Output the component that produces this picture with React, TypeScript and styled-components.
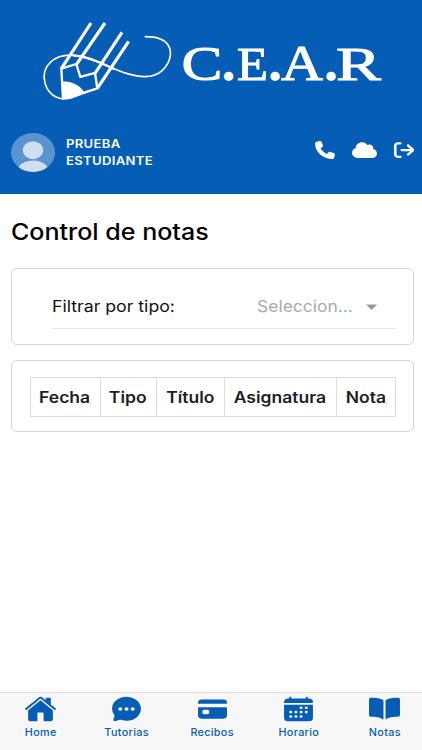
import React from "react";
import styled, { createGlobalStyle } from "styled-components";
import {
  IoBook,
  IoCalendar,
  IoCard,
  IoChatbubbleEllipses,
  IoHome,
} from "react-icons/io5";
import { FaArrowRightFromBracket, FaCloud, FaPhone } from "react-icons/fa6";

const blue = "#065db5";

const GlobalStyle = createGlobalStyle`
  * { box-sizing: border-box; }
  body { margin: 0; background: #fff; }
`;

const Page = styled.div`
  display: flex;
  flex-direction: column;
  width: 422px;
  height: 750px;
  overflow: hidden;
  background: #fff;
  color: #111;
  font-family: Inter, "Liberation Sans", sans-serif;
`;

const Header = styled.header`
  height: 194px;
  flex: none;
  background: ${blue};
  color: #fff;
`;

const Logo = styled.svg`
  display: block;
  width: 422px;
  height: 120px;
`;

const ProfileRow = styled.div`
  display: flex;
  align-items: center;
  height: 64px;
  padding: 0 8px 0 11px;
`;

const Avatar = styled.svg`
  width: 44px;
  height: 39px;
  flex: none;
`;

const UserName = styled.div`
  margin-left: 11px;
  width: 110px;
  font-size: 12px;
  line-height: 17px;
  font-weight: 600;
  letter-spacing: 0.3px;
  transform: scaleX(1.09);
  transform-origin: left;
`;

const Actions = styled.div`
  display: flex;
  align-items: center;
  margin-left: auto;
  padding-bottom: 4px;
  gap: 17px;
`;

const IconBox = styled.span<{ $w: number; $h: number }>`
  display: block;
  flex: none;
  width: ${(p) => p.$w}px;
  height: ${(p) => p.$h}px;
  svg {
    display: block;
    width: 100%;
    height: 100%;
  }
`;

const Main = styled.main`
  flex: 1;
  padding: 20px 8px 0 11px;
`;

const Title = styled.h1`
  margin: 0 0 19px;
  width: max-content;
  font-size: 22.5px;
  line-height: 35px;
  font-weight: 450;
  color: #000;
  transform: scaleX(1.112);
  transform-origin: left;
`;

const Card = styled.section<{ $height: number }>`
  height: ${(p) => p.$height}px;
  margin-bottom: 15px;
  padding: 15px 17px 0 18px;
  border: 1px solid #d6d6d6;
  border-radius: 6px;
`;

const FilterRow = styled.div`
  display: flex;
  align-items: center;
  height: 45px;
  margin-left: 22px;
  border-bottom: 1px solid #e6e6e6;
`;

const FilterText = styled.span<{ $muted?: boolean }>`
  font-size: 16px;
  white-space: nowrap;
  color: ${(p) => (p.$muted ? "#a9a9a9" : "#111")};
  transform: scaleX(${(p) => (p.$muted ? 1.09 : 1.105)});
  transform-origin: ${(p) => (p.$muted ? "right" : "left")};
  margin-left: ${(p) => (p.$muted ? "auto" : "0")};
`;

const Caret = styled.svg`
  width: 11px;
  height: 6px;
  margin: 1px 19px 0 13px;
`;

const Table = styled.table`
  width: 365px;
  margin-top: 1px;
  table-layout: fixed;
  border-collapse: collapse;
`;

const HeadCell = styled.th<{ $width: number }>`
  width: ${(p) => p.$width}px;
  height: 39px;
  padding: 0 1px 0 0;
  border: 1px solid #dcdee1;
  font-size: 15.5px;
  font-weight: 600;
  color: #1c1e21;
  text-align: center;
`;

const HeadText = styled.span`
  display: inline-block;
  transform: scaleX(1.13);
`;

const TabBar = styled.nav`
  height: 58px;
  flex: none;
  border-top: 1px solid #dedede;
  background: #f7f7f7;
  color: ${blue};
`;

const TabGrid = styled.div`
  display: grid;
  grid-template-columns: repeat(5, 86px);
  margin-left: -2.5px;
`;

const Tab = styled.a`
  display: flex;
  flex-direction: column;
  align-items: center;
  padding-top: 2px;
`;

const TabLabel = styled.span`
  margin-top: 2px;
  font-size: 10px;
  line-height: 14px;
  font-weight: 500;
  letter-spacing: 0.3px;
  transform: scaleX(1.08);
`;

const letters = [
  { ch: "C", x: 181.5, w: 41, size: 49 },
  { ch: "E", x: 237, w: 31, size: 47 },
  { ch: "A", x: 281, w: 42, size: 51 },
  { ch: "R", x: 336, w: 45, size: 47 },
];

const dots = [228.5, 275, 331];

const columns = [
  { label: "Fecha", width: 70 },
  { label: "Tipo", width: 56 },
  { label: "Título", width: 68 },
  { label: "Asignatura", width: 112 },
  { label: "Nota", width: 59 },
];

const tabs = [
  { label: "Home", Icon: IoHome },
  { label: "Tutorias", Icon: IoChatbubbleEllipses },
  { label: "Recibos", Icon: IoCard },
  { label: "Horario", Icon: IoCalendar },
  { label: "Notas", Icon: IoBook },
];

export default function App() {
  return (
    <Page>
      <GlobalStyle />
      <Header>
        <Logo viewBox="0 0 422 120" fill="#fff">
          <g transform="translate(30 10) scale(.33333)" fill="none" stroke="#fff" strokeLinecap="round" strokeLinejoin="round">
            <g strokeLinecap="butt" strokeWidth="9.5">
              <path d="M183 39 L94 176 M225 39 L139 164 M276 67 L195 190 M296 94 L202 235" />
            </g>
            <path strokeWidth="7" d="M94 176 L139 162 L151 201 L195 189 L202 235 L158 249 M94 176 L99 265" />
            <path strokeWidth="5" d="M202 235 L137 259 C95 278 57 261 45 220 C31 165 77 131 131 136 C190 141 237 174 292 191 C329 202 372 205 397 181 C419 160 428 129 416 108 C404 86 374 80 346 80" />
            <path d="M131 136 C177 139 212 159 250 176" strokeWidth="7" />
            <path d="M97 215 C125 211 151 228 162 246 L134 260 C122 266 111 267 99 267Z" fill="#fff" stroke="none" />
          </g>
          <g fontFamily='"Liberation Serif", serif' stroke="#fff">
            {letters.map((l) => (
              <text
                key={l.ch}
                x={l.x}
                y="80"
                textLength={l.w}
                lengthAdjust="spacingAndGlyphs"
                fontSize={l.size}
                strokeWidth="1"
              >
                {l.ch}
              </text>
            ))}
            {dots.map((x) => (
              <text key={x} x={x} y="79" textAnchor="middle" fontSize="44" strokeWidth="4" strokeLinejoin="round">.</text>
            ))}
          </g>
        </Logo>
        <ProfileRow>
          <Avatar viewBox="0 0 44 39">
            <clipPath id="avatar"><ellipse cx="22" cy="19.5" rx="22" ry="19.5" /></clipPath>
            <g clipPath="url(#avatar)">
              <rect width="44" height="39" fill="#5993d1" />
              <ellipse cx="22" cy="17.2" rx="10.2" ry="9" fill="#d0dff0" />
              <ellipse cx="22" cy="38" rx="15.5" ry="10.5" fill="#d0dff0" />
            </g>
          </Avatar>
          <UserName>PRUEBA<br />ESTUDIANTE</UserName>
          <Actions>
            <IconBox $w={20} $h={18}><FaPhone preserveAspectRatio="none" /></IconBox>
            <IconBox $w={25} $h={18}><FaCloud preserveAspectRatio="none" /></IconBox>
            <IconBox $w={20.5} $h={18}><FaArrowRightFromBracket preserveAspectRatio="none" /></IconBox>
          </Actions>
        </ProfileRow>
      </Header>
      <Main>
        <Title>Control de notas</Title>
        <Card $height={77}>
          <FilterRow>
            <FilterText>Filtrar por tipo:</FilterText>
            <FilterText $muted>Seleccion...</FilterText>
            <Caret viewBox="0 0 11 6"><path d="M0 0.5H11L5.5 6Z" fill="#999" /></Caret>
          </FilterRow>
        </Card>
        <Card $height={72}>
          <Table>
            <thead>
              <tr>
                {columns.map((c) => (
                  <HeadCell key={c.label} $width={c.width}><HeadText>{c.label}</HeadText></HeadCell>
                ))}
              </tr>
            </thead>
          </Table>
        </Card>
      </Main>
      <TabBar>
        <TabGrid>
          {tabs.map(({ label, Icon }) => (
            <Tab key={label}>
              <IconBox $w={33} $h={28}><Icon preserveAspectRatio="none" /></IconBox>
              <TabLabel>{label}</TabLabel>
            </Tab>
          ))}
        </TabGrid>
      </TabBar>
    </Page>
  );
}
